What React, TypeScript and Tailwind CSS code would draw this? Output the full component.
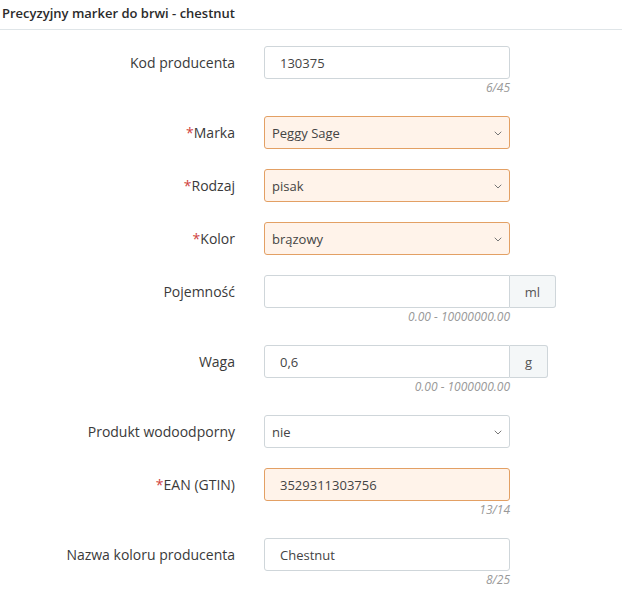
import React from "react";

type Row = {
  label: string;
  required?: boolean;
  value: string;
  kind: "input" | "select";
  hint?: string;
  addon?: string;
  addonWidth?: string;
};

const rows: Row[] = [
  { label: "Kod producenta", value: "130375", kind: "input", hint: "6/45" },
  { label: "Marka", required: true, value: "Peggy Sage", kind: "select" },
  { label: "Rodzaj", required: true, value: "pisak", kind: "select" },
  { label: "Kolor", required: true, value: "brązowy", kind: "select" },
  { label: "Pojemność", value: "", kind: "input", hint: "0.00 - 10000000.00", addon: "ml", addonWidth: "w-[46px]" },
  { label: "Waga", value: "0,6", kind: "input", hint: "0.00 - 1000000.00", addon: "g", addonWidth: "w-[38px]" },
  { label: "Produkt wodoodporny", value: "nie", kind: "select" },
  { label: "EAN (GTIN)", required: true, value: "3529311303756", kind: "input", hint: "13/14" },
  { label: "Nazwa koloru producenta", value: "Chestnut", kind: "input", hint: "8/25" },
];

function Chevron() {
  return (
    <svg width="8" height="5" viewBox="0 0 8 5" className="shrink-0">
      <path d="M1 1l3 3 3-3" fill="none" stroke="#777" strokeWidth="1" strokeLinecap="round" strokeLinejoin="round" />
    </svg>
  );
}

function Field({ row }: { row: Row }) {
  const box = row.required
    ? "border-[#e3a064] bg-[#fff3ea]"
    : "border-[#cfd6da] bg-white";

  return (
    <div className="mb-[20px]">
      <div className="flex items-center">
        <div className="w-[235px] shrink-0 text-right text-[14px] text-[#3a3a3a]">
          {row.required && <span className="text-[#d0433e]">*</span>}
          {row.label}
        </div>
        <div className="ml-[29px] flex">
          {row.kind === "select" ? (
            <div className={`flex h-[33px] w-[246px] items-center justify-between rounded-[3px] border pl-[7px] pr-[7px] pt-[2px] text-[13px] text-[#444] ${box}`}>
              <span>{row.value}</span>
              <Chevron />
            </div>
          ) : (
            <div className={`flex h-[33px] w-[246px] items-center border px-[15px] pt-[2px] text-[13px] text-[#444] ${box} ${row.addon ? "rounded-l-[3px]" : "rounded-[3px]"}`}>
              {row.value}
            </div>
          )}
          {row.addon && (
            <div className={`flex h-[33px] ${row.addonWidth} items-center justify-center rounded-r-[3px] border border-l-0 border-[#cfd6da] bg-[#f4f7f8] pt-[2px] text-[13px] text-[#555]`}>
              {row.addon}
            </div>
          )}
        </div>
      </div>
      {row.hint && (
        <div className="ml-[264px] w-[246px] pt-[1px] text-right text-[12px] italic leading-[16px] text-[#999]">
          {row.hint}
        </div>
      )}
    </div>
  );
}

export default function App() {
  return (
    <div className="min-h-[597px] w-[622px] bg-white" style={{ fontFamily: '"Open Sans", "Noto Sans", sans-serif' }}>
      <div className="flex h-[30px] items-center border-b border-[#dfe5e8] pb-[2px] pl-[2px] text-[13px] font-semibold text-[#2b2b2b]">
        Precyzyjny marker do brwi - chestnut
      </div>
      <div className="pt-[16px]">
        {rows.map((r) => (
          <Field key={r.label} row={r} />
        ))}
      </div>
    </div>
  );
}
